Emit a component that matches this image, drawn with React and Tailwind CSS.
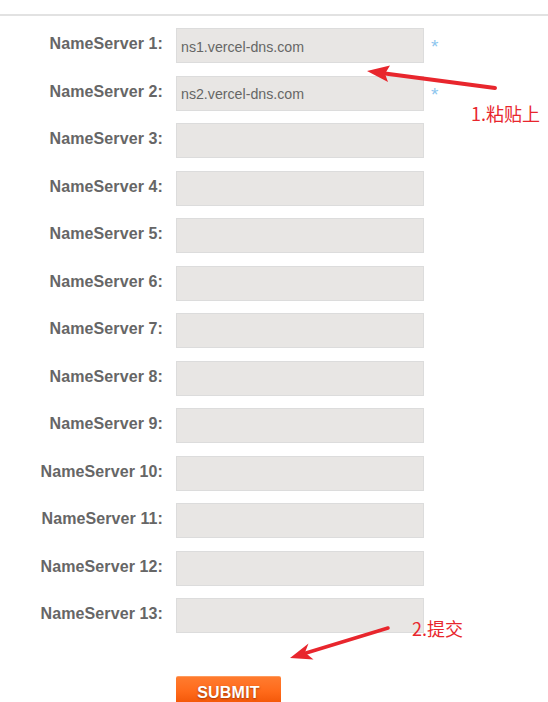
import React from "react";

const rows = [
  { n: 1, v: "ns1.vercel-dns.com", req: true },
  { n: 2, v: "ns2.vercel-dns.com", req: true },
  { n: 3 }, { n: 4 }, { n: 5 }, { n: 6 }, { n: 7 }, { n: 8 }, { n: 9 },
  { n: 10 }, { n: 11 }, { n: 12 }, { n: 13 },
];

export default function App() {
  return (
    <div className="relative w-[548px] h-[702px] overflow-hidden bg-white font-['Liberation_Sans',Arial,sans-serif]">
      <div className="h-[14px]" />
      <div className="h-[2px] bg-[#e2e2e2]" />
      <div className="flex flex-col gap-[12.5px] pt-[12px]">
        {rows.map((r) => (
          <div key={r.n} className="flex items-start">
            <div className="w-[163px] pt-[7px] text-right text-[16px] leading-[18px] font-bold text-[#666666] tracking-[0.1px]">
              NameServer {r.n}:
            </div>
            <input
              readOnly
              value={r.v || ""}
              className="ml-[13px] w-[248px] h-[35px] border border-[#dcdcdc] bg-[#e8e6e4] pl-[4px] pt-[2px] text-[14.2px] text-[#666666] outline-none"
            />
            {r.req && (
              <span className="ml-[7px] pt-[10px] text-[19px] leading-[18px] text-[#8ec6ee]">*</span>
            )}
          </div>
        ))}
      </div>
      <div className="mt-[43px] ml-[176px] w-[105px] h-[30px] rounded-t-[2px] bg-gradient-to-b from-[#ff7b2e] via-[#ff6a1a] to-[#f05200] border-t border-[#ff9a5c] flex justify-center pt-[7px]">
        <span className="text-white font-bold text-[16px] leading-[18px] tracking-[0.2px] [text-shadow:0_1px_2px_rgba(120,40,0,0.7)]">SUBMIT</span>
      </div>

      <svg className="absolute inset-0 pointer-events-none" width="548" height="702">
        <line x1="495" y1="88" x2="385" y2="73.5" stroke="#e8262d" strokeWidth="4" strokeLinecap="round" />
        <polygon points="367,71 390,65.5 385,73.8 388,82" fill="#e8262d" />
        <line x1="388" y1="628" x2="306" y2="653" stroke="#e8262d" strokeWidth="3.5" strokeLinecap="round" />
        <polygon points="290,658 308.5,643.5 305,652.5 313.5,659.5" fill="#e8262d" />
      </svg>
      <div className="absolute left-[471px] top-[102px] text-[18px] leading-[22px] text-[#e8262d] font-['Noto_Sans_CJK_SC',sans-serif]">
        1.粘贴上
      </div>
      <div className="absolute left-[412px] top-[617px] text-[18px] leading-[22px] text-[#e8262d] font-['Noto_Sans_CJK_SC',sans-serif]">
        2.提交
      </div>
    </div>
  );
}
